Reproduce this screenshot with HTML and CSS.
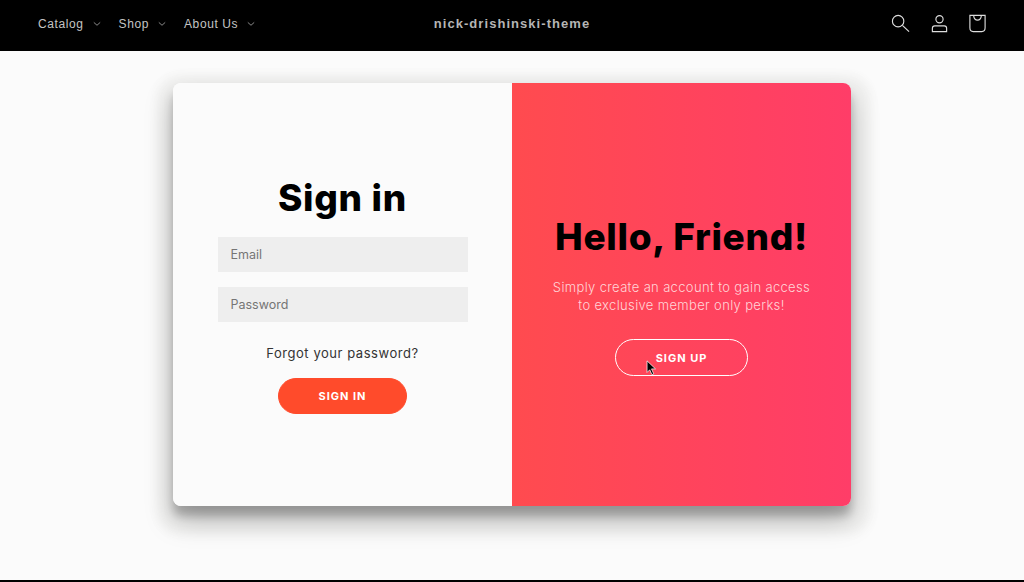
FILE: index.html
```html
<!DOCTYPE html>
<html lang="en">
<head>
  <meta charset="UTF-8">
  <title>nick-drishinski-theme</title>
  <link rel="stylesheet" href="styles.css">
</head>
<body>
  <header class="site-header">
    <nav class="nav-menu">
      <a class="nav-item">Catalog <svg class="caret" viewBox="0 0 10 6"><path d="M1 1l4 3.600L9 1"/></svg></a>
      <a class="nav-item">Shop <svg class="caret" viewBox="0 0 10 6"><path d="M1 1l4 3.600L9 1"/></svg></a>
      <a class="nav-item">About Us <svg class="caret" viewBox="0 0 10 6"><path d="M1 1l4 3.600L9 1"/></svg></a>
    </nav>
    <div class="site-title">nick-drishinski-theme</div>
    <div class="header-icons">
      <svg class="icon" viewBox="0 0 20 20"><circle cx="7.500" cy="7.500" r="6"/><path d="M12 12l7 6.500"/></svg>
      <svg class="icon" viewBox="0 0 20 20"><circle cx="10" cy="5.500" r="3.800"/><path d="M2.500 18.500V15q0-2.500 2.500-2.500h10q2.500 0 2.500 2.500v3.500z"/></svg>
      <svg class="icon" viewBox="0 0 20 20"><path d="M2 1.500h16v13q0 4-3.500 4h-9q-3.500 0-3.500-4z"/><path d="M6 2q.5 4.500 4 4.500T14 2"/></svg>
    </div>
  </header>

  <main class="page">
    <section class="card">
      <div class="panel sign-in">
        <h1>Sign in</h1>
        <input class="field" type="email" placeholder="Email">
        <input class="field" type="password" placeholder="Password">
        <a class="forgot">Forgot your password?</a>
        <button class="btn btn-solid">SIGN IN</button>
      </div>
      <div class="panel overlay">
        <h1>Hello, Friend!</h1>
        <p>Simply create an account to gain access to exclusive member only perks!</p>
        <button class="btn btn-ghost">SIGN UP</button>
        <svg class="cursor" viewBox="0 0 12 18"><path d="M1 1v13l3-3 2.500 5.500 2-1L6 10h4.500z"/></svg>
      </div>
    </section>
  </main>

  <div class="page-end"></div>
</body>
</html>
```

FILE: styles.css
```css
* {
  box-sizing: border-box;
  margin: 0;
  padding: 0;
}
body {
  background-color: #fbfbfb;
  color: #000;
  display: flex;
  flex-direction: column;
  height: 582px;
  overflow: hidden;
  font-family: "Inter", "Liberation Sans", sans-serif;
}

/* header */
.site-header {
  background-color: #000;
  height: 51px;
  display: grid;
  grid-template-columns: 1fr auto 1fr;
  align-items: center;
  padding: 0 37px 4px;
  flex-shrink: 0;
}
.nav-menu {
  display: flex;
  gap: 18px;
  padding-left: 1px;
}
.nav-item {
  color: #c4c4c4;
  font: 12px "Liberation Sans", sans-serif;
  letter-spacing: 0.6px;
  display: flex;
  align-items: center;
  gap: 6px;
}
.caret {
  width: 8px;
  height: 6px;
  margin-left: 3px;
  fill: none;
  stroke: #bdbdbd;
  stroke-width: 0.9;
}
.site-title {
  color: #b5b5b5;
  font: bold 13px "Liberation Sans", sans-serif;
  letter-spacing: 1.05px;
}
.header-icons {
  display: flex;
  justify-content: flex-end;
  gap: 19.5px;
}
.icon {
  width: 19px;
  height: 19px;
  fill: none;
  stroke: #ddd;
  stroke-width: 1.2;
}

/* card */
.page {
  flex: 1;
  display: flex;
  justify-content: center;
  padding-top: 32px;
}
.card {
  width: 678px;
  height: 423px;
  border-radius: 8px;
  overflow: hidden;
  display: flex;
  box-shadow: 0 14px 28px rgba(0, 0, 0, 0.25), 0 10px 10px rgba(0, 0, 0, 0.22), 2px 10px 10px 18px rgba(110, 110, 90, 0.06);
  position: relative;
}
.page-end {
  height: 2px;
  background-color: #000;
  flex-shrink: 0;
}
.panel {
  width: 50%;
  display: flex;
  flex-direction: column;
  align-items: center;
}
h1 {
  font: 800 37px/42px "Inter", sans-serif;
  letter-spacing: 0.7px;
}

/* left panel */
.sign-in {
  background-color: #fbfbfb;
  padding-top: 94px;
}
.sign-in h1 {
  margin-bottom: 18px;
}
.field {
  width: 250px;
  height: 35px;
  background-color: #eee;
  border: 0;
  outline: 0;
  padding: 0 13px;
  margin-bottom: 15px;
  font: 12.5px "Inter", sans-serif;
}
.field::placeholder {
  color: #757575;
  opacity: 1;
}
.forgot {
  color: #333;
  font: 13px/16px "Inter", sans-serif;
  letter-spacing: 0.55px;
  margin-top: 8px;
  margin-bottom: 17px;
}

/* buttons */
.btn {
  height: 36px;
  border-radius: 20px;
  color: #fff;
  font: 700 11px "Inter", sans-serif;
  letter-spacing: 1px;
}
.btn-solid {
  width: 129px;
  background-color: #ff4b2b;
  border: 1px solid #ff4b2b;
}
.btn-ghost {
  width: 133px;
  height: 37px;
  background: transparent;
  border: 1px solid #fff;
}

/* right panel */
.overlay {
  background: linear-gradient(to right, #ff4b4f, #ff3d68);
  padding-top: 133px;
  position: relative;
}
.overlay p {
  color: #ffd5d8;
  width: 262px;
  font: 300 13px/18px "Inter", sans-serif;
  letter-spacing: 0.35px;
  text-align: center;
  margin-top: 20px;
  margin-bottom: 25px;
}
.cursor {
  position: absolute;
  left: 134px;
  top: 277px;
  width: 11px;
  height: 16px;
  fill: #000;
  stroke: #fff;
  stroke-width: 0.8;
}
```
